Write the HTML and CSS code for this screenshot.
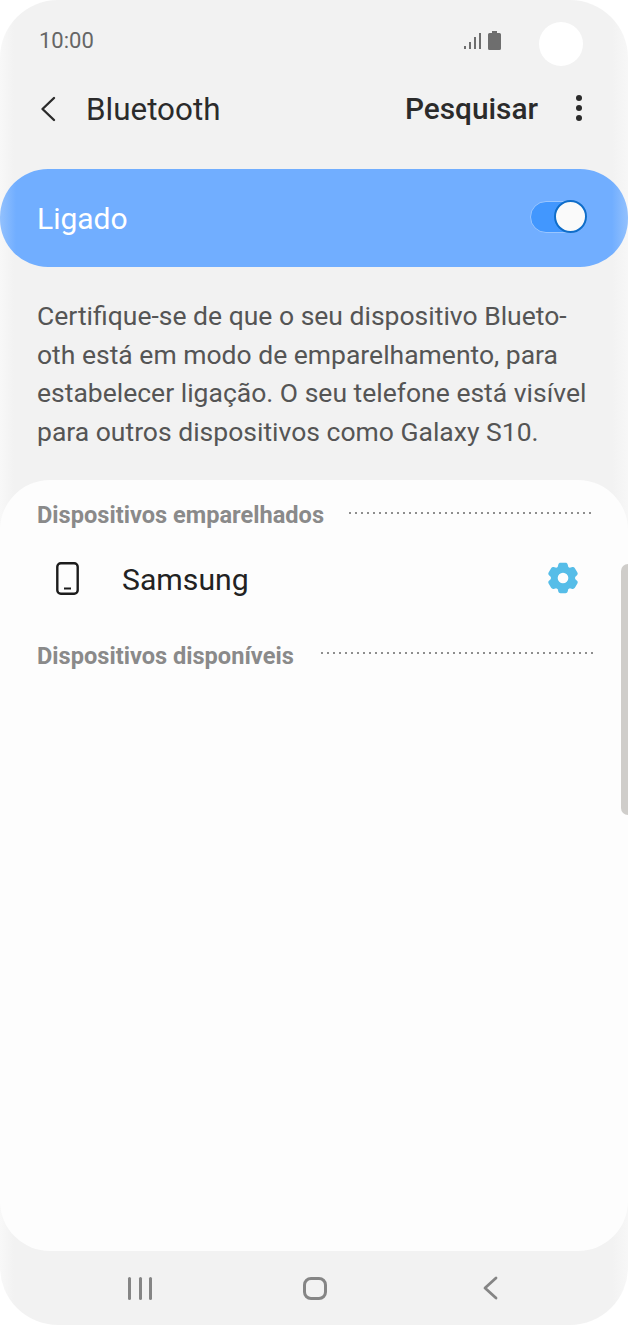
FILE: index.html
```html
<!DOCTYPE html>
<html lang="pt">
<head>
    <meta charset="UTF-8">
    <title>Bluetooth</title>
    <link rel="stylesheet" href="styles.css">
</head>
<body>
<div class="phone">
    <div class="status-bar">
        <span class="time">10:00</span>
        <div class="status-icons">
            <svg width="17" height="17" viewBox="0 0 17 17"><g fill="#6e6e6e"><rect x="0" y="13" width="2" height="3"/><rect x="5" y="9" width="2" height="7"/><rect x="10" y="4" width="2" height="12"/><rect x="15" y="0" width="2" height="16"/></g></svg>
            <svg width="13" height="19" viewBox="0 0 13 19"><path d="M4 0h5v2h2.500a1.500 1.500 0 0 1 1.500 1.500V17.500A1.500 1.500 0 0 1 11.500 19h-10A1.500 1.500 0 0 1 0 17.500V3.500A1.500 1.500 0 0 1 1.500 2H4z" fill="#6e6e6e"/></svg>
        </div>
    </div>
    <div class="camera"></div>

    <div class="app-bar">
        <svg class="back" width="18" height="26" viewBox="0 0 18 26"><path d="M15 2L3.500 13 15 24" fill="none" stroke="#2b2b2b" stroke-width="2.400" stroke-linecap="round" stroke-linejoin="round"/></svg>
        <span class="title">Bluetooth</span>
        <span class="search">Pesquisar</span>
        <div class="more"><i></i><i></i><i></i></div>
    </div>

    <div class="switch-band">
        <span class="switch-label">Ligado</span>
        <div class="toggle"><div class="knob"></div></div>
    </div>

    <p class="intro">Certifique-se de que o seu dispositivo Blueto-<br>oth está em modo de emparelhamento, para<br>estabelecer ligação. O seu telefone está visível<br>para outros dispositivos como Galaxy S10.</p>

    <div class="card">
        <div class="section-head">
            <span>Dispositivos emparelhados</span>
            <div class="dots dots-first"></div>
        </div>
        <div class="device">
            <svg class="device-icon" width="23" height="33" viewBox="0 0 23 33"><rect x="1.300" y="1.300" width="20.400" height="30.400" rx="3.500" fill="none" stroke="#1c1c1c" stroke-width="2.400"/><rect x="8" y="25.500" width="7" height="2" fill="#1c1c1c"/></svg>
            <span class="device-name">Samsung</span>
            <svg class="gear" width="32" height="32" viewBox="0 0 24 24"><path fill="#56bde8" fill-rule="evenodd" d="M13.900.600c.8 0 1.400.5 1.600 1.200l.5 1.900c.4.200.8.400 1.100.6l1.900-.5c.7-.2 1.500.1 1.900.8l1.900 3.300c.4.700.3 1.500-.3 2l-1.400 1.400c0 .2 0 .5 0 .7s0 .5 0 .7l1.400 1.400c.6.500.7 1.300.3 2l-1.900 3.300c-.4.700-1.200 1-1.900.8l-1.900-.5c-.3.200-.7.400-1.100.6l-.5 1.900c-.2.700-.8 1.200-1.600 1.200h-3.800c-.8 0-1.400-.5-1.600-1.200L8 20.300c-.4-.2-.8-.4-1.100-.6l-1.900.5c-.7.200-1.500-.1-1.900-.8l-1.900-3.300c-.4-.7-.3-1.500.3-2l1.400-1.400c0-.2 0-.5 0-.7s0-.5 0-.7L1.500 9.900c-.6-.5-.7-1.300-.3-2l1.900-3.300c.4-.7 1.200-1 1.900-.8l1.900.5c.3-.2.7-.4 1.100-.6l.5-1.900c.2-.7.8-1.200 1.600-1.200zM12 8a4 4 0 1 0 0 8 4 4 0 0 0 0-8z"/></svg>
        </div>
        <div class="section-head section-second">
            <span>Dispositivos disponíveis</span>
            <div class="dots dots-second"></div>
        </div>
    </div>
    <div class="scrollbar"></div>

    <div class="nav-bar">
        <div class="nav-recent"><i></i><i></i><i></i></div>
        <div class="nav-home"></div>
        <svg class="nav-back" width="16" height="24" viewBox="0 0 16 24"><path d="M14 2L3 12l11 10" fill="none" stroke="#858585" stroke-width="2.800" stroke-linecap="round" stroke-linejoin="round"/></svg>
    </div>
</div>
</body>
</html>
```

FILE: styles.css
```css
* {
    margin: 0;
    padding: 0;
    box-sizing: border-box;
}
html, body {
    background-color: #fff;
}
body {
    width: 628px;
    height: 1325px;
    overflow: hidden;
    font-family: Roboto, "Liberation Sans", sans-serif;
}
.phone {
    position: relative;
    width: 628px;
    height: 1325px;
    display: flex;
    flex-direction: column;
    overflow: hidden;
    border-radius: 58px;
    background: linear-gradient(to right, #f8f8f8, #f2f2f2 14px, #f2f2f2 612px, #f7f7f7);
}

/* status bar */
.status-bar {
    height: 80px;
    padding: 0 0 0 39px;
    display: flex;
    align-items: center;
}
.time {
    font-size: 22px;
    color: #666;
}
.status-icons {
    margin-left: auto;
    margin-right: 127px;
    display: flex;
    align-items: flex-end;
    gap: 7px;
}
.camera {
    position: absolute;
    left: 539px;
    top: 22px;
    width: 44px;
    height: 44px;
    border-radius: 50%;
    background-color: #fff;
}

/* app bar */
.app-bar {
    height: 58px;
    padding: 0 0 0 39px;
    display: flex;
    align-items: center;
}
.back {
    margin-right: 29px;
}
.title {
    font-size: 31.400px;
    color: #2b2b2b;
}
.search {
    margin-left: auto;
    margin-top: -2px;
    font-size: 29.800px;
    font-weight: 500;
    color: #2b2b2b;
}
.more {
    width: 8px;
    margin: -2px 45px 0 37px;
    display: flex;
    flex-direction: column;
    gap: 4px;
}
.more i {
    width: 6px;
    height: 6px;
    margin-left: 1px;
    border-radius: 50%;
    background-color: #2b2b2b;
}

/* on/off band */
.switch-band {
    height: 98px;
    margin-top: 31px;
    padding: 0 41px 0 37px;
    display: flex;
    align-items: center;
    justify-content: space-between;
    border-radius: 48px;
    background: linear-gradient(to right, #93c1fd, #71aeff 16px, #71aeff 612px, #93c1fd);
}
.switch-label {
    font-size: 30px;
    color: #fff;
}
.toggle {
    position: relative;
    width: 57px;
    height: 32px;
    margin-top: -3px;
    border-radius: 16px;
    border: 1px solid #9ac6ff;
    background-color: #4297fe;
}
.knob {
    position: absolute;
    right: -1px;
    top: -2px;
    width: 33px;
    height: 33px;
    border-radius: 50%;
    border: 2px solid #0f6dc9;
    background-color: #fafafa;
}

/* description text */
.intro {
    height: 213px;
    padding: 30px 0 0 37px;
    font-size: 26.500px;
    line-height: 38.500px;
    color: #555;
    white-space: nowrap;
}

/* devices card */
.card {
    flex: 1;
    padding: 1px 31px 0 37px;
    border-radius: 50px;
    background-color: #fdfdfd;
}
.section-head {
    height: 68px;
    display: flex;
    align-items: center;
    font-size: 23.600px;
    font-weight: 700;
    color: #8a8a8a;
    white-space: nowrap;
}
.dots {
    flex: 1;
    height: 2px;
    margin: 0 0 5px 23px;
    background-image: radial-gradient(circle, #8e8e8e 1px, transparent 1.100px);
    background-size: 6px 2px;
}
.dots-first {
    margin-right: 4px;
}
.dots-second {
    margin-left: 25px;
    margin-right: 1px;
}
.section-second {
    height: 41px;
    margin-top: 22px;
}
.device {
    height: 64px;
    padding: 0 18px 0 19px;
    display: flex;
    align-items: center;
}
.device-icon {
    margin-top: -6px;
    margin-right: 43px;
}
.device-name {
    margin-top: -4px;
    font-size: 30.200px;
    color: #222;
}
.gear {
    margin-left: auto;
    margin-top: -6px;
}
.scrollbar {
    position: absolute;
    right: 0;
    top: 564px;
    width: 7px;
    height: 251px;
    border-radius: 7px 0 0 7px;
    background-color: #cfcdca;
}

/* navigation bar */
.nav-bar {
    height: 74px;
    padding: 0 0 0 128px;
    display: flex;
    align-items: center;
}
.nav-recent {
    width: 24px;
    display: flex;
    justify-content: space-between;
}
.nav-recent i {
    width: 3px;
    height: 23px;
    border-radius: 2px;
    background-color: #858585;
}
.nav-home {
    width: 24px;
    height: 23px;
    margin-left: 151px;
    border: 3px solid #858585;
    border-radius: 8px;
}
.nav-back {
    margin-left: 155px;
}
```
